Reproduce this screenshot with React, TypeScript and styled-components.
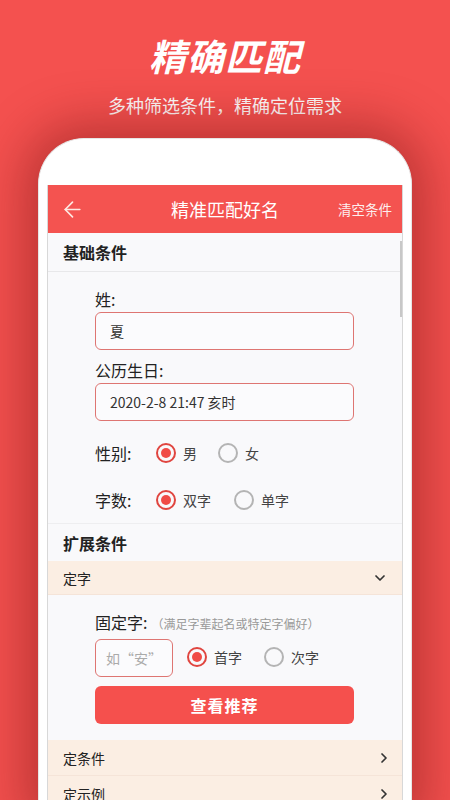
import React, { useState } from "react";
import styled, { createGlobalStyle } from "styled-components";
import { ArrowLeft, ChevronDown, ChevronRight } from "lucide-react";

const GlobalStyle = createGlobalStyle`
  html, body {
    margin: 0;
    padding: 0;
  }
  body {
    font-family: "Noto Sans CJK SC", "Noto Sans", Roboto, sans-serif;
  }
  * {
    box-sizing: border-box;
  }
`;

const Page = styled.div`
  width: 450px;
  height: 800px;
  overflow: hidden;
  background: #f4514f;
  padding-top: 34px;
  display: flex;
  flex-direction: column;
  align-items: center;
`;

const Title = styled.h1`
  margin: 0;
  font-size: 37px;
  line-height: 42px;
  font-weight: 700;
  font-style: italic;
  color: #fff;
  letter-spacing: 1px;
`;

const Subtitle = styled.p`
  margin: 16px 0 0;
  font-size: 18px;
  line-height: 26px;
  color: #fff;
`;

const Phone = styled.div`
  margin-top: 20px;
  width: 374px;
  flex: 1;
  background: #fff;
  border-radius: 46px 46px 0 0;
  border: 1px solid #e6e6e6;
  border-bottom: none;
  padding: 46px 8px 0 8px;
  box-shadow: 0 0 50px 14px rgba(120, 20, 20, 0.45);
  display: flex;
`;

const Screen = styled.div`
  position: relative;
  flex: 1;
  background: #f9f9fb;
  border-left: 1px solid #d8d8d8;
  border-right: 1px solid #d8d8d8;
  display: flex;
  flex-direction: column;
  overflow: hidden;
`;

const ScrollThumb = styled.div`
  position: absolute;
  right: 0;
  top: 56px;
  width: 2px;
  height: 76px;
  background: #c8c8c8;
`;

const AppBar = styled.div`
  height: 48px;
  background: #f45350;
  display: flex;
  align-items: center;
  justify-content: space-between;
  padding: 0 10px 0 12px;
  color: #fff;
`;

const BarTitle = styled.div`
  position: absolute;
  left: 0;
  right: 0;
  text-align: center;
  font-size: 18px;
  pointer-events: none;
`;

const BarAction = styled.span`
  font-size: 13.5px;
  color: #fdeeee;
`;

const SectionHeader = styled.div<{ $border?: boolean }>`
  height: ${(p) => (p.$border ? "39px" : "37px")};
  display: flex;
  align-items: center;
  padding-left: 15px;
  font-size: 16px;
  font-weight: 700;
  color: #222;
  border-bottom: ${(p) => (p.$border ? "1px solid #e8e8ea" : "none")};
`;

const Divider = styled.div`
  height: 1px;
  background: #eeeef0;
`;

const Form = styled.div<{ $bottom: number }>`
  padding: 16px 48px ${(p) => p.$bottom}px 47px;
  display: flex;
  flex-direction: column;
`;

const Label = styled.div<{ $top?: number }>`
  font-size: 16px;
  line-height: 22px;
  color: #222;
  margin-top: ${(p) => p.$top ?? 0}px;
  display: flex;
  align-items: baseline;
`;

const Hint = styled.span`
  font-size: 12px;
  color: #999;
  margin-left: 4px;
`;

const Field = styled.div<{ $width?: number; $placeholder?: boolean }>`
  margin-top: 2px;
  height: 38px;
  width: ${(p) => (p.$width ? `${p.$width}px` : "100%")};
  border: 1px solid #de7572;
  border-radius: 6px;
  background: #fbfbfd;
  display: flex;
  align-items: center;
  justify-content: ${(p) => (p.$placeholder ? "center" : "flex-start")};
  padding-left: ${(p) => (p.$placeholder ? "0" : "14px")};
  font-size: 14px;
  color: ${(p) => (p.$placeholder ? "#aaa" : "#333")};
`;

const OptionRow = styled.div<{ $top: number }>`
  margin-top: ${(p) => p.$top}px;
  height: 30px;
  display: flex;
  align-items: center;
`;

const OptionLabel = styled.span`
  width: 61px;
  font-size: 16px;
  color: #222;
`;

const RadioGroup = styled.div<{ $gap: number; $left?: number }>`
  display: flex;
  align-items: center;
  gap: ${(p) => p.$gap}px;
  margin-left: ${(p) => p.$left ?? 0}px;
`;

const RadioItem = styled.label`
  display: flex;
  align-items: center;
  gap: 7px;
  font-size: 14px;
  color: #444;
  cursor: pointer;
`;

const RadioCircle = styled.span<{ $checked: boolean }>`
  width: 20px;
  height: 20px;
  border-radius: 50%;
  border: 2px solid ${(p) => (p.$checked ? "#e0453f" : "#b4b4b4")};
  display: flex;
  align-items: center;
  justify-content: center;
  &::after {
    content: "";
    width: 10px;
    height: 10px;
    border-radius: 50%;
    background: #f04b46;
    display: ${(p) => (p.$checked ? "block" : "none")};
  }
`;

const InlineRow = styled.div`
  margin-top: 2px;
  display: flex;
  align-items: center;
`;

const SubmitButton = styled.button`
  margin-top: 9px;
  height: 38px;
  width: 100%;
  border: none;
  border-radius: 6px;
  background: #f5504d;
  color: #fff;
  font-family: inherit;
  font-size: 16px;
  font-weight: 700;
  letter-spacing: 1px;
`;

const FoldRow = styled.div<{ $height: number; $right: number }>`
  height: ${(p) => p.$height}px;
  background: #fbeee3;
  display: flex;
  align-items: center;
  justify-content: space-between;
  padding: 0 ${(p) => p.$right}px 0 15px;
  font-size: 14px;
  color: #222;
  border-bottom: 1px solid #f5e4d8;
`;

function Radio({
  options,
  gap,
  left,
}: {
  options: string[];
  gap: number;
  left?: number;
}) {
  const [value, setValue] = useState(0);
  return (
    <RadioGroup $gap={gap} $left={left}>
      {options.map((o, i) => (
        <RadioItem key={o} onClick={() => setValue(i)}>
          <RadioCircle $checked={value === i} />
          {o}
        </RadioItem>
      ))}
    </RadioGroup>
  );
}

export default function App() {
  return (
    <>
      <GlobalStyle />
      <Page>
        <Title>精确匹配</Title>
        <Subtitle>多种筛选条件，精确定位需求</Subtitle>
        <Phone>
          <Screen>
            <AppBar>
              <ArrowLeft size={25} strokeWidth={1.6} color="#fde9e2" />
              <BarTitle>精准匹配好名</BarTitle>
              <BarAction>清空条件</BarAction>
            </AppBar>

            <SectionHeader $border>基础条件</SectionHeader>
            <Form $bottom={8}>
              <Label>姓:</Label>
              <Field>夏</Field>
              <Label $top={9}>公历生日:</Label>
              <Field>2020-2-8 21:47 亥时</Field>
              <OptionRow $top={17}>
                <OptionLabel>性别:</OptionLabel>
                <Radio options={["男", "女"]} gap={21} />
              </OptionRow>
              <OptionRow $top={17}>
                <OptionLabel>字数:</OptionLabel>
                <Radio options={["双字", "单字"]} gap={23} />
              </OptionRow>
            </Form>

            <Divider />
            <SectionHeader>扩展条件</SectionHeader>
            <FoldRow $height={34} $right={14}>
              定字
              <ChevronDown size={16} strokeWidth={2.6} color="#333" />
            </FoldRow>
            <Form $bottom={16}>
              <Label>
                固定字:<Hint>（满足字辈起名或特定字偏好）</Hint>
              </Label>
              <InlineRow>
                <Field $width={78} $placeholder>
                  如“安”
                </Field>
                <Radio options={["首字", "次字"]} gap={22} left={14} />
              </InlineRow>
              <SubmitButton>查看推荐</SubmitButton>
            </Form>
            <FoldRow $height={36} $right={10}>
              定条件
              <ChevronRight size={16} strokeWidth={2.6} color="#333" />
            </FoldRow>
            <FoldRow $height={36} $right={10}>
              定示例
              <ChevronRight size={16} strokeWidth={2.6} color="#333" />
            </FoldRow>
            <ScrollThumb />
          </Screen>
        </Phone>
      </Page>
    </>
  );
}
